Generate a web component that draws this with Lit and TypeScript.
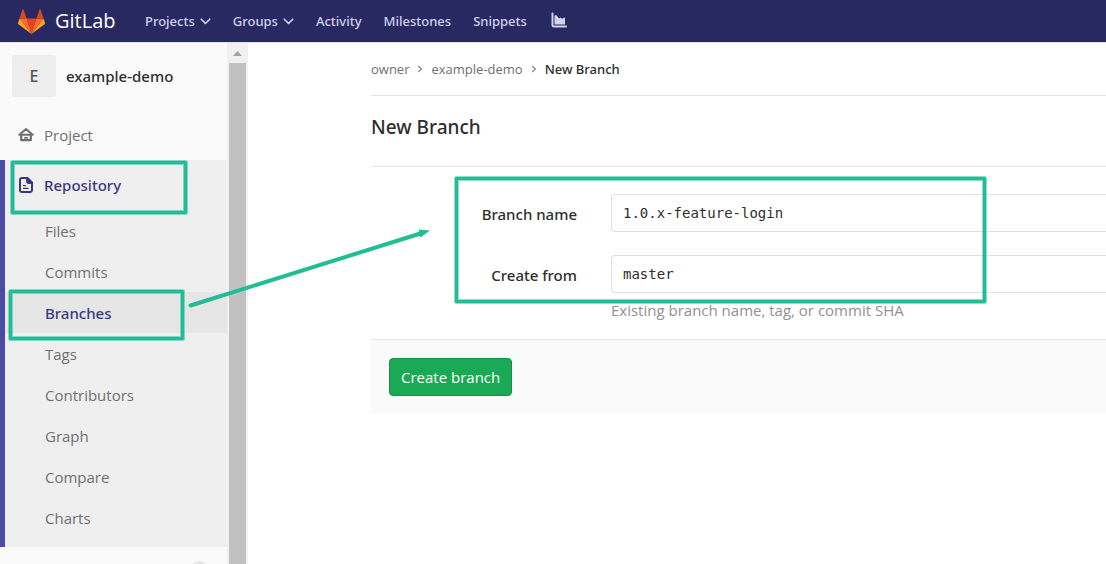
import { LitElement, html, css, svg, nothing } from "lit";
import { customElement, property, state } from "lit/decorators.js";
import { classMap } from "lit/directives/class-map.js";

const chevron = html`<svg width="11" height="7" viewBox="0 0 11 7" aria-hidden="true">
  <path d="M1.2 1.2 5.5 5.4 9.8 1.2" fill="none" stroke="currentColor" stroke-width="1.6" stroke-linecap="round" stroke-linejoin="round" />
</svg>`;

const medium = css`
  .medium { font-family: "Noto Sans", sans-serif; font-weight: 500; }
`;

@customElement("top-bar")
class TopBar extends LitElement {
  static styles = css`
    :host { display: block; }
    .bar {
      display: flex;
      align-items: center;
      height: 42px;
      padding-left: 18px;
      background: #292961;
      border-bottom: 1px solid #e5e5e5;
    }
    .brand {
      display: flex;
      align-items: center;
      gap: 10px;
      width: 127px;
      flex: none;
      color: #fff;
      font-size: 20px;
      line-height: 28px;
      text-decoration: none;
    }
    .brand svg { flex: none; }
    .nav { display: flex; align-items: center; gap: 22px; }
    .link {
      display: flex;
      align-items: center;
      gap: 5px;
      padding: 0;
      border: 0;
      background: none;
      color: #d1d1f0;
      font: 500 13px/20px "Noto Sans", "Open Sans", sans-serif;
      text-decoration: none;
      white-space: nowrap;
    }
  `;

  render() {
    return html`<header class="bar">
      <a class="brand" href="#home">
        <svg width="27" height="25" viewBox="0 0 27 25" aria-hidden="true">
          <path d="M13.5 25 8.6 9.6h9.8z" fill="#e24329" />
          <path d="M13.5 25 8.6 9.6H1.5z" fill="#fc6d26" />
          <path d="M1.5 9.6 0 14.2c-.1.4 0 .8.4 1.1L13.5 25z" fill="#fca326" />
          <path d="M1.5 9.6h7.1L5.5.5c-.2-.5-.8-.5-1 0z" fill="#e24329" />
          <path d="M13.5 25l4.9-15.4h7.1z" fill="#fc6d26" />
          <path d="M25.5 9.6 27 14.2c.1.4 0 .8-.4 1.1L13.5 25z" fill="#fca326" />
          <path d="M25.5 9.6h-7.1L21.5.5c.2-.5.8-.5 1 0z" fill="#e24329" />
        </svg>
        GitLab
      </a>
      <nav class="nav" aria-label="Main">
        <button class="link" type="button">Projects ${chevron}</button>
        <button class="link" type="button">Groups ${chevron}</button>
        <a class="link" href="#activity">Activity</a>
        <a class="link" href="#milestones">Milestones</a>
        <a class="link" href="#snippets">Snippets</a>
        <a class="link" href="#analytics" aria-label="Analytics">
          <svg width="19" height="18" viewBox="0 0 19 18" aria-hidden="true">
            <path d="M3.5 1.5v11.500c0 1 .5 1.500 1.500 1.500h12" fill="none" stroke="currentColor" stroke-width="2" stroke-linecap="round" />
            <path d="M5.500 12.500V3.500L7.500 3.200 10 6.600l1.600-1.200 1.500 1.300L16 5.200v7.300z" fill="currentColor" />
          </svg>
        </a>
      </nav>
    </header>`;
  }
}

@customElement("side-bar")
class SideBar extends LitElement {
  @property() current = "Branches";

  static styles = [
    medium,
    css`
      :host { display: flex; flex: none; width: 248px; overflow: hidden; background: #fafafa; }
      .menu { flex: 1; min-width: 0; }
      .project {
        display: flex;
        align-items: center;
        gap: 10px;
        padding: 12px 12px 13px;
        color: #2e2e2e;
        font-size: 15px;
        text-decoration: none;
      }
      .avatar {
        display: grid;
        place-items: center;
        width: 44px;
        height: 42px;
        border-radius: 3px;
        background: #eee;
        color: #555;
        font-size: 16px;
      }
      .item {
        display: flex;
        align-items: center;
        gap: 10px;
        height: 50px;
        padding-left: 18px;
        color: #707070;
        font-size: 15px;
        text-decoration: none;
      }
      .section { padding-bottom: 9px; border-left: 5px solid #4b4ba3; background: #efefef; }
      .section .item { padding-left: 13px; color: #393982; }
      .list { margin: 0; padding: 0; list-style: none; }
      .sub {
        display: flex;
        align-items: center;
        height: 41px;
        padding-left: 40px;
        color: #707070;
        font-size: 15px;
        text-decoration: none;
      }
      .sub.active { background: #e6e6e6; color: #393982; }
      .more { width: 16px; height: 16px; margin: 14px 20px 0 auto; border-radius: 50%; background: #e6e6e6; }
      .track { display: flex; flex-direction: column; align-items: center; width: 21px; background: #f1f1f1; }
      .track svg { flex: none; }
      .thumb { flex: 1; width: 17px; background: #c1c1c1; }
    `,
  ];

  render() {
    const pages = ["Files", "Commits", "Branches", "Tags", "Contributors", "Graph", "Compare", "Charts"];
    return html`
      <nav class="menu" aria-label="Project">
        <a class="project medium" href="#project"><span class="avatar">E</span>example-demo</a>
        <a class="item" href="#overview">
          <svg width="16" height="16" viewBox="0 0 16 16" aria-hidden="true" fill="none" stroke="currentColor">
            <path d="M1.2 7.8h13.6M1.6 7.4 8 2l6.4 5.4" stroke-width="2" stroke-linecap="round" stroke-linejoin="round" />
            <path d="M3.2 8v5.2h9.6V8" stroke-width="2.2" stroke-linejoin="round" />
            <path d="M6.8 13v-2.4h2.4V13" stroke-width="1.2" />
          </svg>
          Project
        </a>
        <div class="section">
          <a class="item medium" href="#repository">
            <svg width="16" height="16" viewBox="0 0 16 16" aria-hidden="true">
              <path d="M4 1h5.5L14 5.5V13a2 2 0 0 1-2 2H4a2 2 0 0 1-2-2V3a2 2 0 0 1 2-2z" fill="none" stroke="currentColor" stroke-width="2" stroke-linejoin="round" />
              <path d="M8 1h2.5L14.5 5v2H11a3 3 0 0 1-3-3z" fill="currentColor" />
              <path d="M5.5 8.6h2.2M5.5 11.4h4.6" stroke="currentColor" stroke-width="1.3" stroke-linecap="round" />
            </svg>
            Repository
          </a>
          <ul class="list">
            ${pages.map((name) => {
              const active = name === this.current;
              return html`<li>
                <a
                  class=${classMap({ sub: true, active, medium: active })}
                  href="#${name.toLowerCase()}"
                  aria-current=${active ? "page" : nothing}
                  >${name}</a
                >
              </li>`;
            })}
          </ul>
        </div>
        <div class="more"></div>
      </nav>
      <div class="track" aria-hidden="true">
        <svg width="17" height="20" viewBox="0 0 17 20"><path d="M4 13 8.5 8 13 13z" fill="#a3a3a3" /></svg>
        <div class="thumb"></div>
      </div>
    `;
  }
}

@customElement("branch-form")
class BranchForm extends LitElement {
  @state() private name = "1.0.x-feature-login";
  @state() private source = "master";

  static styles = [
    medium,
    css`
      :host { display: block; flex: 1; min-width: 0; padding-left: 123px; }
      .crumbs {
        display: flex;
        align-items: center;
        gap: 8px;
        height: 52px;
        border-bottom: 1px solid #e5e5e5;
        color: #707070;
        font-size: 13px;
      }
      .crumbs a { color: inherit; text-decoration: none; }
      .here { color: #2e2e2e; }
      .title {
        margin: 0;
        padding: 18px 0 26px;
        border-bottom: 1px solid #e5e5e5;
        color: #2e2e2e;
        font-size: 19px;
        line-height: 26px;
      }
      .fields {
        display: grid;
        grid-template-columns: 206px 1fr;
        column-gap: 34px;
        row-gap: 21px;
        padding: 27px 0 18px;
      }
      .label {
        height: 40px;
        color: #2e2e2e;
        font-size: 15px;
        line-height: 40px;
        text-align: right;
      }
      .input {
        display: block;
        box-sizing: border-box;
        width: 100%;
        height: 38px;
        padding: 0 11px;
        border: 1px solid #dfdfdf;
        border-right: 0;
        border-radius: 4px 0 0 4px;
        background: #fff;
        color: #2e2e2e;
        font: 14px "DejaVu Sans Mono", monospace;
      }
      .help { margin: 6px 0 0; color: #919191; font-size: 15px; line-height: 22px; }
      .actions { padding: 18px; border-top: 1px solid #e5e5e5; background: #fafafa; }
      .create {
        display: block;
        height: 38px;
        padding: 0 11px;
        border: 1px solid #168f48;
        border-radius: 4px;
        background: #1aaa55;
        color: #fff;
        font: 15px "Open Sans", "Noto Sans", sans-serif;
      }
    `,
  ];

  render() {
    const sep = html`<svg width="6" height="8" viewBox="0 0 6 8" aria-hidden="true">
      <path d="M1.2 1 4.4 4 1.2 7" fill="none" stroke="#8a8a8a" stroke-width="1.3" />
    </svg>`;
    return html`<main>
      <nav class="crumbs" aria-label="Breadcrumb">
        <a href="#owner">owner</a>${sep}<a href="#project">example-demo</a>${sep}<span class="here medium">New Branch</span>
      </nav>
      <h1 class="title medium">New Branch</h1>
      <form @submit=${(e: Event) => e.preventDefault()}>
        <div class="fields">
          <label class="label medium" for="name">Branch name</label>
          <div>
            <input class="input" id="name" type="text" .value=${this.name}
              @input=${(e: Event) => (this.name = (e.target as HTMLInputElement).value)} />
          </div>
          <label class="label medium" for="source">Create from</label>
          <div>
            <input class="input" id="source" type="text" aria-describedby="help" .value=${this.source}
              @input=${(e: Event) => (this.source = (e.target as HTMLInputElement).value)} />
            <p class="help" id="help">Existing branch name, tag, or commit SHA</p>
          </div>
        </div>
        <div class="actions"><button class="create" type="submit">Create branch</button></div>
      </form>
    </main>`;
  }
}

@customElement("app-root")
class AppRoot extends LitElement {
  static styles = css`
    :host {
      display: flex;
      flex-direction: column;
      position: relative;
      height: 100vh;
      overflow: hidden;
      background: #fff;
      font-family: "Open Sans", "Noto Sans", sans-serif;
    }
    .body { display: flex; flex: 1; min-height: 0; }
    .marks { position: absolute; top: 0; left: 0; pointer-events: none; }
  `;

  render() {
    const boxes = [
      [12.5, 162.5, 173, 50],
      [10.5, 291.5, 172, 47],
      [456.5, 178.5, 528, 123],
    ];
    return html`
      <top-bar></top-bar>
      <div class="body">
        <side-bar></side-bar>
        <branch-form></branch-form>
      </div>
      <svg class="marks" width="1000" height="400" viewBox="0 0 1000 400" fill="none" stroke="#20bd96" stroke-linejoin="round" aria-hidden="true">
        ${boxes.map(
          ([x, y, w, h]) => svg`
            <rect x=${x} y=${y} width=${w} height=${h} stroke-width="5" opacity="0.5" />
            <rect x=${x} y=${y} width=${w} height=${h} stroke-width="3" />`
        )}
        <path d="M190.5 305.5 422 233" stroke-width="4" stroke-linecap="round" />
        <path d="M418.5 229.5 430 230.5 420.5 237.5z" fill="#20bd96" stroke="none" />
      </svg>
    `;
  }
}
